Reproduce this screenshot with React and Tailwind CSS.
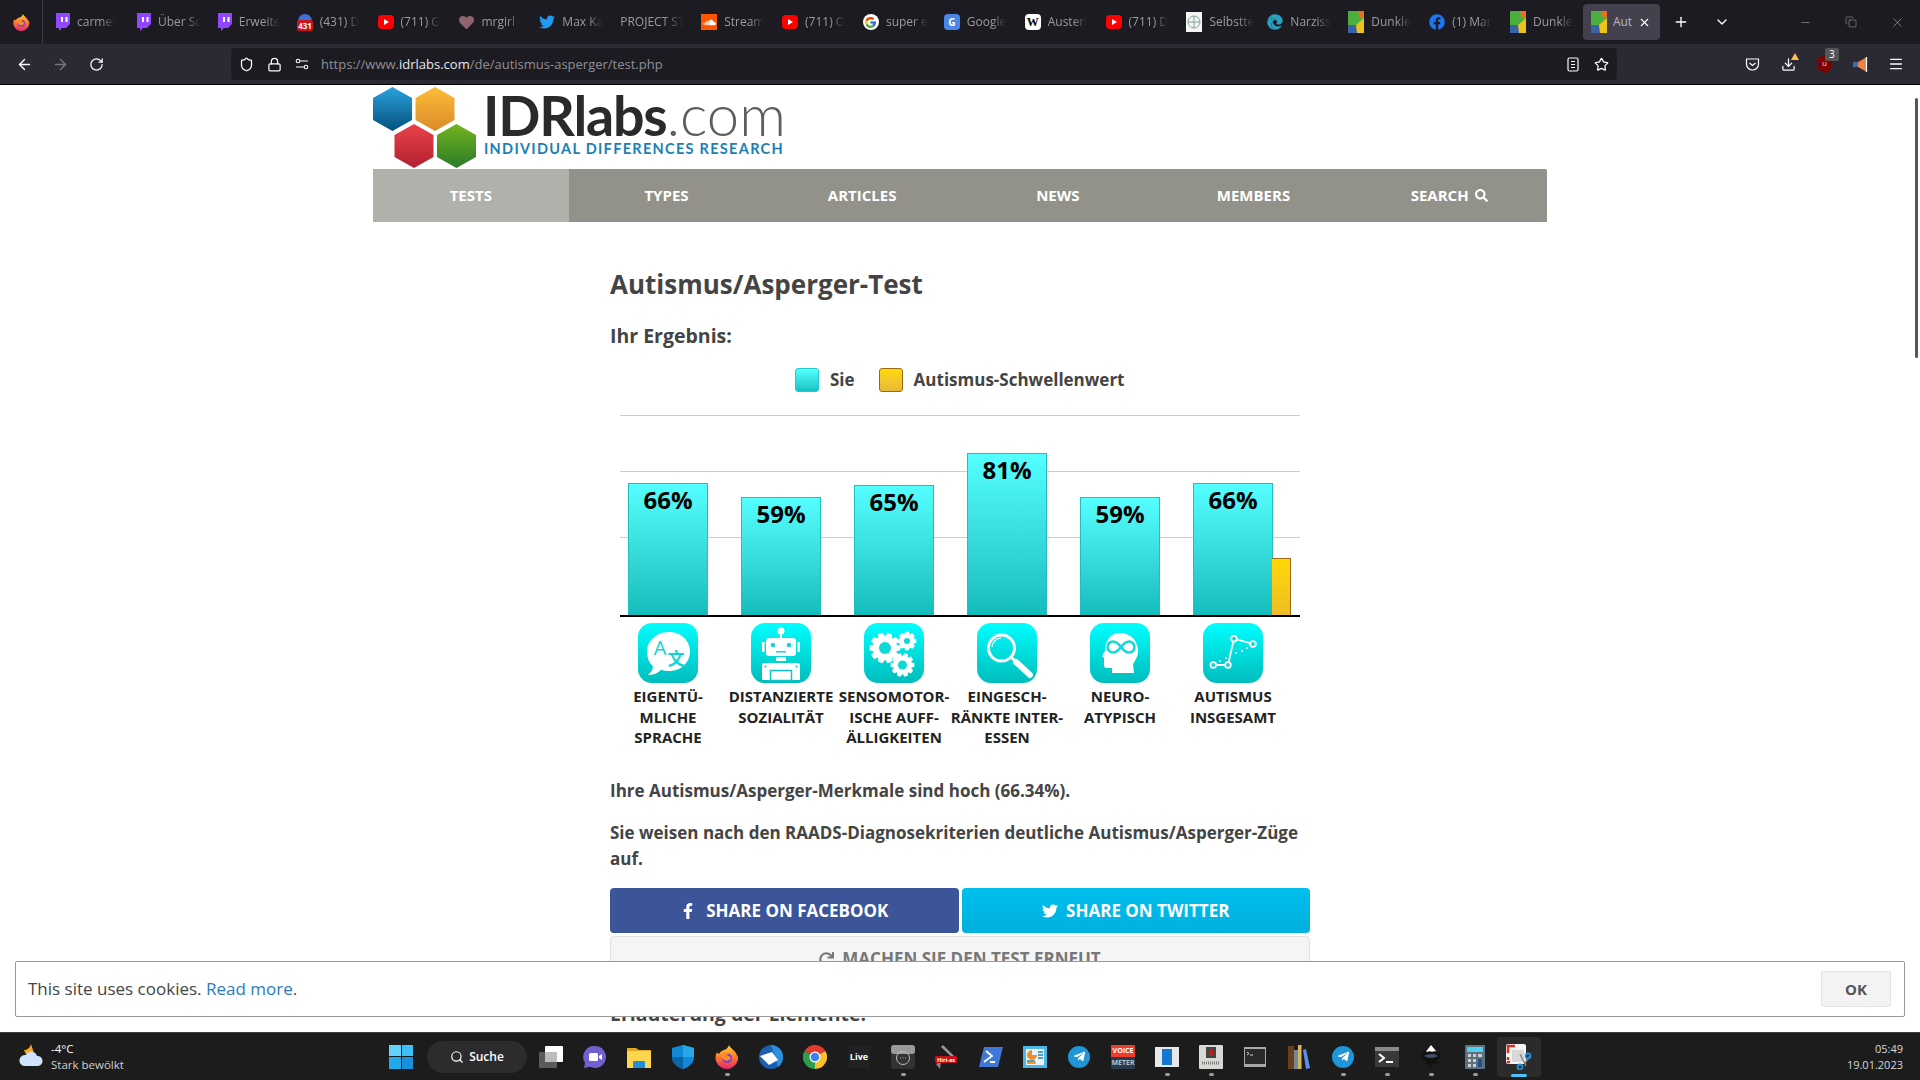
import React from 'react';
import { ArrowLeft, ArrowRight, RotateCw, Shield, Lock, Star, Download, Menu, Plus, ChevronDown, Minus, Copy, X, Search } from 'lucide-react';
import { FaFacebookF, FaTwitter, FaRedo, FaSearch, FaHeart, FaSoundcloud, FaEdge, FaFacebook, FaTelegramPlane } from 'react-icons/fa';
import { FcGoogle } from 'react-icons/fc';

const Firefox = ({ size = 16 }) => (
  <svg width={size} height={size} viewBox="0 0 24 24">
    <defs>
      <linearGradient id="ffx" x1="0" y1="0" x2="0" y2="1">
        <stop offset="0" stopColor="#ffd22e" />
        <stop offset="0.5" stopColor="#ff7a2a" />
        <stop offset="1" stopColor="#e5266e" />
      </linearGradient>
    </defs>
    <path d="M14 0c1 3 7 6 9 12 .6 6-5 12-11 12S.5 19 .5 13c0-2 .5-4 1.500-5.500L4 9c1-2 3-3.500 5-4 2-.5 4-2 5-5z" fill="url(#ffx)" />
    <circle cx="12" cy="13" r="5" fill="#7b3fd0" />
    <path d="M7 10c2-2 5-2.500 8-1.500-2 .5-3 1-3 2 2 .5 4 1 3.500 3-1 2-4 3-6.500 1.500C7 14 6 12 7 10z" fill="#ff8a2a" />
  </svg>
);

const Twitch = () => (
  <svg width="16" height="18" viewBox="0 0 16 18">
    <path d="M2 0h14v11l-4 4H8l-3 3v-3H2z" fill="#9146ff" />
    <path d="M7 4h2v5H7zM11.500 4h2v5h-2z" fill="#fff" />
  </svg>
);

const Youtube = () => (
  <svg width="16" height="16" viewBox="0 0 16 16">
    <rect x="0" y="1" width="16" height="14" rx="4" fill="#f00" />
    <path d="M6 5l5 3-5 3z" fill="#fff" />
  </svg>
);

const Calendar431 = () => (
  <svg width="16" height="20" viewBox="0 0 16 20">
    <path d="M1 9a7 7 0 0 1 14 0z" fill="#3f6fd8" />
    <rect x="0" y="8" width="16" height="11" rx="2" fill="#c9141c" />
    <text x="8" y="17" textAnchor="middle" fontSize="8" fontWeight="700" fill="#fff" fontFamily="Open Sans">431</text>
  </svg>
);

const Dunkle = () => (
  <svg width="16" height="22" viewBox="0 0 16 22">
    <rect width="16" height="22" fill="#4cae3c" />
    <path d="M10 0h6v7h-4z" fill="#ef6c22" />
    <path d="M0 14h8l2 8H0z" fill="#3a62a8" />
    <path d="M16 7v15H9l-1-8z" fill="#eec21c" />
  </svg>
);

const favicons = {
  twitch: <Twitch />,
  cal: <Calendar431 />,
  yt: <Youtube />,
  heart: <FaHeart size={15} color="#8f6470" />,
  tw: <FaTwitter size={16} color="#1d9bf0" />,
  sc: <span className="flex w-[16px] h-[16px] items-center justify-center bg-[#ff5500]"><FaSoundcloud size={13} color="#fff" /></span>,
  g: <span className="flex w-[16px] h-[16px] items-center justify-center rounded-full bg-white"><FcGoogle size={13} /></span>,
  tr: <span className="flex w-[16px] h-[16px] items-center justify-center rounded-sm bg-[#4a86e8] text-[10px] font-bold text-white">G</span>,
  w: <span className="flex w-[16px] h-[16px] items-center justify-center rounded-sm bg-white text-[12px] font-bold text-black font-['Liberation_Serif',serif]">W</span>,
  selbst: (
    <svg width="16" height="20" viewBox="0 0 16 20">
      <rect width="16" height="20" fill="#f3f6f3" />
      <circle cx="8" cy="10" r="6" fill="none" stroke="#7fa596" strokeWidth="1" />
      <path d="M8 4v12M2 10h12" stroke="#7fa596" strokeWidth="1" />
    </svg>
  ),
  edge: <FaEdge size={16} color="#2a9fc0" />,
  dunkle: <Dunkle />,
  fb: <FaFacebook size={16} color="#1877f2" />,
};

const tabs = [
  ['twitch', 'carmel'], ['twitch', 'Über Sc'], ['twitch', 'Erweite'], ['cal', '(431) D'], ['yt', '(711) G'],
  ['heart', 'mrgirl -'], ['tw', 'Max Ka'], [null, 'PROJECT ST'], ['sc', 'Stream'], ['yt', '(711) O'],
  ['g', 'super e'], ['tr', 'Google'], ['w', 'Austeri'], ['yt', '(711) D'], ['selbst', 'Selbstte'],
  ['edge', 'Narziss'], ['dunkle', 'Dunkle'], ['fb', '(1) Mar'], ['dunkle', 'Dunkle'],
];

function Gear({ cx, cy, r, teeth, hole }) {
  const pts = [];
  const step = (Math.PI * 2) / teeth;
  for (let i = 0; i < teeth; i++) {
    const a = i * step;
    [[-0.32, r * 0.76], [-0.16, r], [0.16, r], [0.32, r * 0.76]].forEach(([o, rad]) => {
      pts.push(`${cx + Math.cos(a + o * step * 1.5) * rad},${cy + Math.sin(a + o * step * 1.5) * rad}`);
    });
  }
  return (
    <g>
      <polygon points={pts.join(' ')} fill="#fff" />
      <circle cx={cx} cy={cy} r={hole} fill="#10d8d8" />
    </g>
  );
}

const chartIcons = [
  <>
    <path d="M31 9c12 0 21 8.500 21 19.500S43 48 31 48c-3 0-5.500-.4-8-1.300C20 50 15 52 10 52c3-2.500 4.500-5 5-8.500C11 40 9 35 9 28.500 9 17.500 19 9 31 9z" fill="#fff" />
    <text x="22" y="32" textAnchor="middle" fontSize="20" fill="#0fd4d4" fontFamily="Open Sans">A</text>
    <text x="38" y="42" textAnchor="middle" fontSize="17" fontWeight="700" fill="#0fd4d4" fontFamily="Noto Sans CJK SC">文</text>
  </>,
  <>
    <circle cx="30" cy="8" r="3.500" fill="#fff" />
    <rect x="29" y="11" width="2" height="4" fill="#fff" />
    <rect x="15" y="15" width="30" height="18" rx="3" fill="#fff" />
    <circle cx="22" cy="22" r="2.300" fill="#0fd8d8" />
    <circle cx="38" cy="22" r="2.300" fill="#0fd8d8" />
    <rect x="25" y="28" width="10" height="1.500" fill="#0fd8d8" />
    <rect x="11" y="19" width="2.500" height="10" fill="#fff" />
    <rect x="46.500" y="19" width="2.500" height="10" fill="#fff" />
    <rect x="25" y="34" width="10" height="4" fill="#fff" />
    <path d="M13 40h34a2 2 0 0 1 2 2v15H11V42a2 2 0 0 1 2-2z" fill="#fff" />
    <rect x="19.500" y="47.500" width="21" height="10" fill="#fff" stroke="#0cc6c6" strokeWidth="1.500" />
    <circle cx="14.500" cy="43.500" r="1" fill="#0cc6c6" />
    <circle cx="45.500" cy="43.500" r="1" fill="#0cc6c6" />
  </>,
  <>
    <Gear cx={21} cy={25} r={15.500} teeth={10} hole={6} />
    <Gear cx={43} cy={18} r={9.500} teeth={8} hole={3} />
    <Gear cx={38.500} cy={42} r={12} teeth={10} hole={4.500} />
  </>,
  <>
    <circle cx="24.500" cy="25" r="13" fill="none" stroke="#fff" strokeWidth="3" />
    <path d="M15 24a9.500 9.500 0 0 1 9-9" fill="none" stroke="#fff" strokeWidth="1.200" />
    <path d="M35 35l2 2" stroke="#fff" strokeWidth="3" />
    <path d="M39 39l14 13" stroke="#fff" strokeWidth="6" strokeLinecap="round" />
  </>,
  <>
    <path d="M30 10c11 0 18 8 18 18 0 7-4 10-5 14l1 8H22v-5h-6c-2 0-2-3-2-5v-5l-2-2 3-5c0-10 5-18 15-18z" fill="#fff" />
    <path d="M31 24c-3-4-5-5.500-8-5.500a5.500 5.500 0 0 0 0 11c3 0 5-1.500 8-5.500s5-5.500 8-5.500a5.500 5.500 0 0 1 0 11c-3 0-5-1.500-8-5.500z" fill="none" stroke="#0fd8d8" strokeWidth="2.500" />
  </>,
  <>
    <path d="M10.300 42H25L31 15.700 50 21" fill="none" stroke="#fff" strokeWidth="1.800" />
    {[[10.3, 42], [25, 42], [31, 15.7], [50, 21]].map(([x, y]) => (
      <circle key={x} cx={x} cy={y} r="2.800" fill="#0fd2d2" stroke="#fff" strokeWidth="1.800" />
    ))}
    {[[17, 38], [23, 35], [33, 30], [39, 28], [44, 25]].map(([x, y]) => (
      <circle key={x} cx={x} cy={y} r="1" fill="#fff" />
    ))}
  </>,
];

const bars = [
  { value: '66%', height: 132, label: ['EIGENTÜ-', 'MLICHE', 'SPRACHE'] },
  { value: '59%', height: 118, label: ['DISTANZIERTE', 'SOZIALITÄT'] },
  { value: '65%', height: 130, label: ['SENSOMOTOR-', 'ISCHE AUFF-', 'ÄLLIGKEITEN'] },
  { value: '81%', height: 162, label: ['EINGESCH-', 'RÄNKTE INTER-', 'ESSEN'] },
  { value: '59%', height: 118, label: ['NEURO-', 'ATYPISCH'] },
  { value: '66%', height: 132, label: ['AUTISMUS', 'INSGESAMT'], threshold: 57 },
];

const Terminal = ({ bar }) => (
  <svg width="24" height="22" viewBox="0 0 24 22">
    <rect width="24" height="20" y="1" fill="#3a3a3a" />
    {bar && <rect width="24" height="4" y="1" fill="#8a8a8a" />}
    <path d="M4 8l5 4-5 4" fill="none" stroke="#fff" strokeWidth="2" />
    <rect x="11" y="15" width="7" height="2" fill="#fff" />
  </svg>
);

const taskIcons = [
  { key: 'desk', icon: (
    <svg width="24" height="22" viewBox="0 0 24 22">
      <rect x="6" y="0" width="18" height="16" rx="1" fill="#fff" />
      <rect x="0" y="6" width="18" height="16" rx="1" fill="#5a5a5a" />
      <rect x="6" y="6" width="12" height="10" fill="#bdbdbd" />
    </svg>
  ) },
  { key: 'chat', icon: (
    <svg width="24" height="24" viewBox="0 0 24 24">
      <path d="M12 1a11 11 0 1 1-5 20.800L1 23l1-5A11 11 0 0 1 12 1z" fill="#6f62d0" />
      <rect x="6" y="8" width="9" height="8" rx="1.500" fill="#fff" />
      <path d="M16 11l3-2v6l-3-2z" fill="#fff" />
    </svg>
  ) },
  { key: 'files', icon: (
    <svg width="24" height="22" viewBox="0 0 24 22">
      <path d="M0 2h9l3 2h12v18H0z" fill="#e5a91f" />
      <rect y="5" width="24" height="17" fill="#fcd64e" />
      <rect x="6" y="15" width="12" height="7" rx="1" fill="#1f8fd8" />
    </svg>
  ) },
  { key: 'def', icon: (
    <svg width="22" height="24" viewBox="0 0 22 24">
      <path d="M11 0l11 3v9c0 6-5 10-11 12C5 22 0 18 0 12V3z" fill="#1488d8" />
      <path d="M11 0l11 3v9H11z" fill="#28a8e8" />
      <path d="M11 12v12C5 22 0 18 0 12z" fill="#0c64a8" />
    </svg>
  ) },
  { key: 'ff', dot: true, icon: <Firefox size={24} /> },
  { key: 'tb', icon: (
    <svg width="24" height="24" viewBox="0 0 24 24">
      <circle cx="12" cy="12" r="12" fill="#1b5fb0" />
      <path d="M12 0a12 12 0 0 1 12 12c0 4-2 8-5 10l-2-8z" fill="#2d8fe0" />
      <path d="M1 11l12-4 6 8-9 5z" fill="#fff" />
    </svg>
  ) },
  { key: 'chrome', icon: (
    <svg width="24" height="24" viewBox="0 0 24 24">
      <path d="M12 12L1.600 6A12 12 0 0 1 22.400 6z" fill="#e33b2e" />
      <path d="M12 12l10.400-6A12 12 0 0 1 12 24z" fill="#fbc02d" />
      <path d="M12 12v12A12 12 0 0 1 1.600 6z" fill="#2c9f48" />
      <circle cx="12" cy="12" r="5.500" fill="#fff" />
      <circle cx="12" cy="12" r="4.300" fill="#3b82f0" />
    </svg>
  ) },
  { key: 'live', icon: <span className="flex w-[22px] h-[22px] items-center justify-center bg-[#222] text-[9px] font-bold text-white">Live</span> },
  { key: 'dev', dot: true, icon: (
    <svg width="24" height="24" viewBox="0 0 24 24">
      <rect width="24" height="24" rx="3" fill="#333" />
      <rect width="24" height="9" rx="3" fill="#9a9a9a" />
      <circle cx="12" cy="13" r="6.500" fill="none" stroke="#bbb" strokeWidth="1" />
      <path d="M9 13h.8M11.600 13h.8M14.200 13h.8" stroke="#ccc" strokeWidth="1" />
    </svg>
  ) },
  { key: 'knife', icon: (
    <svg width="24" height="24" viewBox="0 0 24 24">
      <path d="M8 0l14 14-2 1L6 2z" fill="#999" />
      <path d="M1 19l4 5 1-8z" fill="#888" />
      <rect x="0" y="11" width="22" height="7" rx="1" fill="#c0111a" />
      <text x="11" y="16.500" textAnchor="middle" fontSize="5.500" fontWeight="700" fill="#fff" fontFamily="Open Sans">Hiri-as</text>
    </svg>
  ) },
  { key: 'ps', icon: (
    <svg width="24" height="20" viewBox="0 0 24 20">
      <path d="M5 0h19l-5 20H0z" fill="#3f78d8" />
      <path d="M7 4l6 5-8 6M11 15h5" fill="none" stroke="#fff" strokeWidth="1.800" />
    </svg>
  ) },
  { key: 'tile', icon: (
    <svg width="24" height="22" viewBox="0 0 24 22">
      <rect width="24" height="22" fill="#4fb6e8" />
      <rect x="3" y="3" width="18" height="16" fill="#e8f4fa" />
      <path d="M9 4a5 5 0 1 0 5 5H9z" fill="#e8912a" />
      <path d="M4 15h8M15 6h5M15 9h5M15 12h5" stroke="#2b7fb8" strokeWidth="1.500" />
      <rect x="4" y="16" width="9" height="2" fill="#e8a02a" />
    </svg>
  ) },
  { key: 'tg1', icon: <span className="flex w-[22px] h-[22px] items-center justify-center rounded-full bg-[#1f96d8]"><FaTelegramPlane size={13} color="#fff" /></span> },
  { key: 'voice', icon: (
    <span className="flex flex-col w-[24px] h-[24px] text-center text-[7px] leading-[12px] font-bold">
      <span className="bg-[#f03c2c] text-white">VOICE</span>
      <span className="bg-[#2b3a48] text-[#b8c0c8]">METER</span>
    </span>
  ) },
  { key: 'win', dot: true, icon: (
    <svg width="24" height="20" viewBox="0 0 24 20">
      <rect width="24" height="20" fill="#e8e8e8" />
      <rect x="7" y="2" width="10" height="16" fill="#1478d0" />
    </svg>
  ) },
  { key: 'chip', dot: true, icon: (
    <svg width="24" height="24" viewBox="0 0 24 24">
      <rect width="24" height="24" rx="1" fill="#d8d8d4" />
      <rect x="7" y="2" width="10" height="11" fill="#444" />
      <rect x="10" y="4" width="4" height="7" fill="#c01a1a" />
      <path d="M3 18h18" stroke="#777" strokeWidth="3" strokeDasharray="1 1" />
    </svg>
  ) },
  { key: 'term1', icon: (
    <svg width="22" height="20" viewBox="0 0 22 20">
      <rect width="22" height="20" fill="#a8a8a8" />
      <rect x="1" y="2" width="20" height="15" fill="#2a2a2a" />
      <path d="M3 5l2 1.500L3 8M6 8h3" stroke="#fff" strokeWidth="0.800" fill="none" />
    </svg>
  ) },
  { key: 'books', icon: (
    <svg width="22" height="24" viewBox="0 0 22 24">
      <rect x="0" y="1" width="6" height="23" fill="#6b3f1c" />
      <rect x="6" y="5" width="4" height="19" fill="#6f8a98" />
      <rect x="10" y="0" width="3.500" height="24" fill="#d8b45a" />
      <path d="M15 5l3-1 4 19-4 1z" fill="#5b8ee8" />
    </svg>
  ) },
  { key: 'tg2', dot: true, icon: <span className="flex w-[22px] h-[22px] items-center justify-center rounded-full bg-[#1f96d8]"><FaTelegramPlane size={13} color="#fff" /></span> },
  { key: 'term2', dot: true, icon: <Terminal bar /> },
  { key: 'ink', dot: true, icon: (
    <svg width="22" height="24" viewBox="0 0 22 24">
      <path d="M11 0l11 11-5 4 1 4-5-1-2 5-3-3-3-4-5-5z" fill="#111" />
      <path d="M11 0l5.500 6.500c-3-1-4 1-5.500 0s-3 1-5 0z" fill="#fff" />
      <path d="M4 11c3-2 10-3 14 0-3 2-9 3-14 0z" fill="#3f4f6a" />
    </svg>
  ) },
  { key: 'calc', dot: true, icon: (
    <svg width="20" height="24" viewBox="0 0 20 24">
      <rect width="20" height="24" rx="1" fill="#5f6f7c" />
      <rect x="2" y="2" width="16" height="5" fill="#4fd0ee" />
      <path d="M3 9h3v3H3zM8 9h3v3H8zM13 9h4v3h-4zM3 14h3v3H3zM8 14h3v3H8zM3 19h3v3H3zM8 19h3v3H8z" fill="#c8d0d4" />
      <rect x="13" y="14" width="4" height="8" fill="#204f8a" />
    </svg>
  ) },
  { key: 'snip', active: true, icon: (
    <svg width="26" height="26" viewBox="0 0 26 26">
      <rect x="0" y="0" width="20" height="20" rx="2" fill="#f4f4f4" />
      <path d="M2 9V2h7M2 13v3M2 17v1h2" fill="none" stroke="#d8301c" strokeWidth="2.500" />
      <rect x="6" y="6" width="12" height="12" fill="#d8d8d8" />
      <path d="M14 10l6 12M24 12l-6 8" stroke="#888" strokeWidth="1.500" />
      <circle cx="22" cy="12" r="2.500" fill="none" stroke="#1f8fd8" strokeWidth="1.800" />
      <circle cx="14" cy="23" r="2.500" fill="none" stroke="#1f8fd8" strokeWidth="1.800" />
    </svg>
  ) },
];

function BrowserChrome() {
  return (
    <div className="shrink-0">
      <div className="flex h-[44px] bg-[#1c1b22] text-[12px] text-[#9b9ba1]">
        <div className="flex w-[43px] shrink-0 items-center justify-center border-r border-[#3c3b44] mr-[3px]">
          <Firefox size={17} />
        </div>
        {tabs.map(([fav, title], i) => (
          <div key={i} className="flex w-[80.9px] shrink-0 items-center gap-[7px] pl-[8px] overflow-hidden">
            {fav && <span className="flex w-[16px] shrink-0 items-center justify-center">{favicons[fav]}</span>}
            <span className="overflow-hidden whitespace-nowrap [mask-image:linear-gradient(to_right,black_65%,transparent)]">{title}</span>
          </div>
        ))}
        <div className="flex w-[77px] h-[36px] mt-[4px] shrink-0 items-center rounded bg-[#42414d] pl-[8px] gap-[6px] overflow-hidden">
          <span className="shrink-0"><Dunkle /></span>
          <span className="w-[19px] overflow-hidden whitespace-nowrap text-[#b8b8bd]">Autis</span>
          <X size={13} color="#fff" className="shrink-0" />
        </div>
        <div className="flex w-[42px] items-center justify-center text-white"><Plus size={16} /></div>
        <div className="flex w-[40px] items-center justify-center text-white"><ChevronDown size={16} /></div>
        <div className="ml-auto flex text-[#9a9a9e]">
          <div className="flex w-[46px] items-center justify-center"><Minus size={13} strokeWidth={1.200} /></div>
          <div className="flex w-[46px] items-center justify-center"><Copy size={12} strokeWidth={1.200} /></div>
          <div className="flex w-[46px] items-center justify-center"><X size={15} strokeWidth={1.200} /></div>
        </div>
      </div>
      <div className="flex h-[41px] items-center border-b border-black bg-[#2b2a33] pl-[6px] text-[#fbfbfe]">
        <div className="flex w-[36px] justify-center"><ArrowLeft size={17} /></div>
        <div className="flex w-[36px] justify-center text-[#77767e]"><ArrowRight size={17} /></div>
        <div className="flex w-[36px] justify-center"><RotateCw size={15} /></div>
        <div className="ml-[117px] flex h-[32px] w-[1386px] items-center rounded bg-[#1c1b22] pl-[8px] pr-[8px]">
          <Shield size={15} />
          <Lock size={15} className="ml-[13px]" />
          <svg width="14" height="12" viewBox="0 0 14 12" className="ml-[13px]" fill="none" stroke="#fbfbfe" strokeWidth="1.100">
            <circle cx="3" cy="3" r="1.800" /><path d="M5 3h8M1 9h8" /><circle cx="11" cy="9" r="1.800" />
          </svg>
          <span className="ml-[12px] mt-[1px] text-[13px] text-[#8f8f96]">https://www.<span className="text-[#e8e8ec]">idrlabs.com</span>/de/autismus-asperger/test.php</span>
          <svg width="12" height="15" viewBox="0 0 12 15" className="ml-auto" fill="none" stroke="#fbfbfe" strokeWidth="1.200">
            <rect x="1" y="1" width="10" height="13" rx="1.500" /><path d="M4 4.500h4M4 7.500h4M4 10.500h4" />
          </svg>
          <Star size={15} className="ml-[15px]" />
        </div>
        <div className="ml-[117px] flex w-[36px] justify-center">
          <svg width="15" height="15" viewBox="0 0 15 15" fill="none" stroke="#fbfbfe" strokeWidth="1.200">
            <path d="M1.500 2h12v5a6 6 0 0 1-12 0z" /><path d="M4.500 6l3 2.500 3-2.500" />
          </svg>
        </div>
        <div className="relative flex w-[36px] justify-center">
          <Download size={15} />
          <span className="absolute -top-[4px] left-[21px] h-0 w-0 border-x-[4px] border-b-[7px] border-x-transparent border-b-[#ffbd4f]" />
        </div>
        <div className="relative flex w-[36px] justify-center">
          <svg width="15" height="17" viewBox="0 0 15 17"><path d="M0 1.500L7.500 0 15 1.500V9c0 4-4 6.500-7.500 8C4 15.500 0 13 0 9z" fill="#800000" /><text x="7.500" y="10" textAnchor="middle" fontSize="8" fill="#ddd" fontFamily="Open Sans">u</text></svg>
          <span className="absolute -top-[8px] left-[19px] rounded-[2px] bg-[#555] px-[4px] text-[10px] leading-[13px] text-white">3</span>
        </div>
        <div className="flex w-[36px] justify-center">
          <svg width="15" height="17" viewBox="0 0 15 17"><path d="M0 6h5v5H0z" fill="#3a6ea8" /><path d="M5 6l9-5v15l-9-5z" fill="#f0804a" /><path d="M13.500 1v15" stroke="#fff" strokeWidth="1.200" /></svg>
        </div>
        <div className="flex w-[36px] justify-center"><Menu size={16} /></div>
      </div>
    </div>
  );
}

function Logo() {
  return (
    <div className="flex h-[84px] items-start">
      <svg width="104" height="82" viewBox="0 0 104 82" className="mt-[2px] shrink-0">
        <defs>
          <linearGradient id="hb" x1="0" y1="0" x2="0" y2="1"><stop offset="0" stopColor="#2aa3dc" /><stop offset="1" stopColor="#05507e" /></linearGradient>
          <linearGradient id="ho" x1="0" y1="0" x2="0" y2="1"><stop offset="0" stopColor="#fdbd36" /><stop offset="1" stopColor="#d98a2a" /></linearGradient>
          <linearGradient id="hr" x1="0" y1="0" x2="0" y2="1"><stop offset="0" stopColor="#e8434a" /><stop offset="1" stopColor="#b3202f" /></linearGradient>
          <linearGradient id="hg" x1="0" y1="0" x2="0" y2="1"><stop offset="0" stopColor="#74b41e" /><stop offset="1" stopColor="#2a7a2a" /></linearGradient>
        </defs>
        <path d="M19.500 0L39 11v22L19.500 44 0 33V11z" fill="url(#hb)" />
        <path d="M62 0l19.500 11v22L62 44 42.500 33V11z" fill="url(#ho)" />
        <path d="M41 37l19.500 11v22L41 81 21.500 70V48z" fill="url(#hr)" />
        <path d="M83.500 37L103 48v22L83.500 81 64 70V48z" fill="url(#hg)" />
      </svg>
      <div className="ml-[6px] font-['Lato',sans-serif]">
        <div className="mt-[2px] h-[54px] text-[55.500px] leading-[54px] tracking-[-1.200px] whitespace-nowrap">
          <span className="font-bold text-[#2a2a2c]">IDRlabs</span>
          <span className="text-[58px] font-light tracking-[0px] text-[#5e5e60]">.com</span>
        </div>
        <div className="ml-[1px] text-[14.500px] font-bold leading-[16px] tracking-[1.300px] whitespace-nowrap text-[#1c7fb4]">INDIVIDUAL DIFFERENCES RESEARCH</div>
      </div>
    </div>
  );
}

function Chart() {
  return (
    <div className="mt-[23px] mx-[10px]">
      <div className="relative h-[202px] border-b-2 border-black">
        <div className="absolute inset-x-0 top-0 h-[1px] bg-[#ccc]" />
        <div className="absolute inset-x-0 top-[56px] h-[1px] bg-[#ccc]" />
        <div className="absolute inset-x-0 top-[122px] h-[1px] bg-[#ccc]" />
        <div className="absolute -left-[8.500px] bottom-0 flex items-end">
          {bars.map((bar, i) => (
            <div key={i} className="flex w-[113px] justify-center">
              <div
                className="relative w-[80px] border border-b-0 border-[#25bcbc] bg-gradient-to-b from-[#55ffff] to-[#12bcbc] text-center text-[24px] font-bold leading-[32px] text-black"
                style={{ height: bar.height }}
              >
                {bar.value}
                {bar.threshold && (
                  <div
                    className="absolute left-full bottom-0 w-[19px] border border-b-0 border-l-0 border-[#9a6a10] bg-gradient-to-b from-[#ffd800] to-[#eebc22]"
                    style={{ height: bar.threshold }}
                  />
                )}
              </div>
            </div>
          ))}
        </div>
      </div>
      <div className="-ml-[8.500px] mt-[6px] flex">
        {bars.map((bar, i) => (
          <div key={i} className="flex w-[113px] shrink-0 flex-col items-center">
            <svg width="60" height="60" viewBox="0 0 60 60">
              <defs>
                <linearGradient id={`ic${i}`} x1="0" y1="0" x2="0" y2="1">
                  <stop offset="0" stopColor="#00ffff" />
                  <stop offset="1" stopColor="#00bcbc" />
                </linearGradient>
              </defs>
              <rect width="60" height="60" rx="14" fill={`url(#ic${i})`} />
              {chartIcons[i]}
            </svg>
            <div className="mt-[3px] whitespace-nowrap text-center text-[15px] font-bold leading-[20.500px] text-[#222]">
              {bar.label.map((line) => <div key={line}>{line}</div>)}
            </div>
          </div>
        ))}
      </div>
    </div>
  );
}

function Taskbar() {
  return (
    <div className="flex h-[48px] shrink-0 items-center border-t border-[#3b3b3b] bg-[#1c1c1c] text-[11.500px] text-white">
      <div className="flex w-[379px] shrink-0 items-center pl-[18px]">
        <svg width="26" height="26" viewBox="0 0 26 26" className="shrink-0">
          <path d="M13 0c-1 4-4 6-7 6 1 3 2 5 5 6l5-3c-1-3-2-6-3-9z" fill="#f5a623" />
          <path d="M8 11a6 6 0 0 1 11 1 5 5 0 0 1 1 10H6a5.500 5.500 0 0 1 2-11z" fill="#cfe3fb" />
        </svg>
        <div className="ml-[7px] leading-[16px]">
          <div>-4°C</div>
          <div className="text-[#cfcfcf]">Stark bewölkt</div>
        </div>
      </div>
      <div className="flex w-[44px] justify-center">
        <div className="grid h-[24px] w-[24px] grid-cols-2 gap-[1px]">
          <span className="bg-[#5fd3fb]" /><span className="bg-[#3cc0f5]" /><span className="bg-[#23a8ea]" /><span className="bg-[#1a90dc]" />
        </div>
      </div>
      <div className="ml-[4px] mr-[2px] flex h-[32px] w-[100px] items-center justify-center gap-[5px] rounded-full bg-[#2c2c2c] text-[12px] font-semibold">
        <Search size={14} />Suche
      </div>
      {taskIcons.map((item) => (
        <div key={item.key} className={`relative flex h-[40px] w-[44px] shrink-0 items-center justify-center rounded ${item.active ? 'bg-[#2b2b2b]' : ''}`}>
          {item.icon}
          {item.dot && <span className="absolute bottom-[1px] h-[3px] w-[5px] rounded-full bg-[#9a9a9a]" />}
          {item.active && <span className="absolute bottom-0 h-[3px] w-[16px] rounded-full bg-[#4cc2ff]" />}
        </div>
      ))}
      <div className="ml-auto pr-[17px] text-right text-[11px] leading-[16px] text-[#d8d8d8]">
        <div>05:49</div>
        <div>19.01.2023</div>
      </div>
    </div>
  );
}

export default function App() {
  return (
    <div className="flex h-screen flex-col overflow-hidden bg-white font-['Open_Sans',sans-serif]">
      <BrowserChrome />
      <main className="relative min-h-0 flex-1 overflow-hidden">
        <div className="mx-auto w-[1174px]">
          <Logo />
          <nav className="grid h-[53px] grid-cols-6 rounded-tr-[2px] bg-[#92928a] text-[15px] font-bold text-white">
            {['TESTS', 'TYPES', 'ARTICLES', 'NEWS', 'MEMBERS'].map((item, i) => (
              <div key={item} className={`flex items-center justify-center ${i === 0 ? 'bg-[#b0b1aa]' : ''}`}>{item}</div>
            ))}
            <div className="flex items-center justify-center gap-[6px]">SEARCH <FaSearch size={13} /></div>
          </nav>
        </div>

        <div className="mx-auto w-[700px] text-[#444]">
          <h1 className="mt-[44px] text-[26px] font-bold leading-[36px]">Autismus/Asperger-Test</h1>
          <h2 className="mt-[20px] text-[19.500px] font-bold leading-[28px]">Ihr Ergebnis:</h2>
          <div className="mt-[18px] flex h-[24px] items-center pl-[185px] text-[17px] font-bold">
            <span className="h-[24px] w-[24px] rounded-[3px] border border-[#25c8c8] bg-gradient-to-b from-[#55ffff] to-[#10c4c4]" />
            <span className="ml-[11px]">Sie</span>
            <span className="ml-[24px] h-[24px] w-[24px] rounded-[3px] border border-[#9a6a10] bg-gradient-to-b from-[#ffd800] to-[#eab838]" />
            <span className="ml-[11px]">Autismus-Schwellenwert</span>
          </div>
          <Chart />
          <p className="mt-[30px] text-[17px] font-bold leading-[26px]">Ihre Autismus/Asperger-Merkmale sind hoch (66.34%).</p>
          <p className="mt-[16.500px] text-[17px] font-bold leading-[26px]">Sie weisen nach den RAADS-Diagnosekriterien deutliche Autismus/Asperger-Züge auf.</p>
          <div className="mt-[15.500px] flex gap-[3px] text-[17px] font-bold text-white">
            <div className="flex h-[45px] flex-1 items-center justify-center gap-[10px] rounded-[4px] bg-[#3b5598] pt-[1px]"><FaFacebookF size={16} />SHARE ON FACEBOOK</div>
            <div className="flex h-[45px] flex-1 items-center justify-center gap-[8px] rounded-[4px] bg-gradient-to-b from-[#00bfee] to-[#00b0de] pt-[1px]"><FaTwitter size={16} />SHARE ON TWITTER</div>
          </div>
          <div className="mt-[3px] flex h-[45px] items-center justify-center gap-[8px] rounded-[4px] border border-[#e0e0e0] bg-[#f5f5f5] pt-[2px] text-[17px] font-bold text-[#777]"><FaRedo size={15} />MACHEN SIE DEN TEST ERNEUT</div>
          <h3 className="mt-[19px] text-[19.500px] font-bold leading-[28px]">Erläuterung der Elemente:</h3>
        </div>

        {/* scrollbar thumb */}
        <div className="absolute right-[2px] top-[13px] h-[260px] w-[3px] rounded-full bg-[#555]" />

        {/* cookie notice */}
        <div className="absolute inset-x-[15px] bottom-[15px] flex h-[56px] items-center justify-between rounded-[2px] border border-[#999] bg-white pl-[12px] pr-[13px] text-[17px] text-[#444]">
          <span>This site uses cookies. <span className="text-[#2a7ac0]">Read more</span>.</span>
          <div className="flex h-[36px] w-[70px] items-center justify-center rounded-[2px] border border-[#e4e4e4] bg-[#f3f3f3] text-[15px] font-bold text-[#555]">OK</div>
        </div>
      </main>
      <Taskbar />
    </div>
  );
}
